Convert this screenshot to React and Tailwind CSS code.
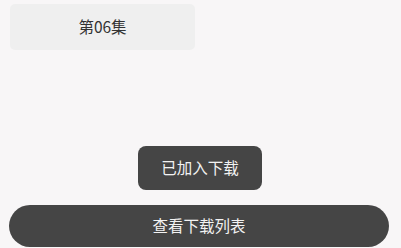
import React from 'react';

const font = { fontFamily: '"Noto Sans CJK SC", "Noto Sans", sans-serif' };

const App = () => {
  return (
    <div className="flex flex-col h-[248px] w-full bg-[#f8f6f7] overflow-hidden" style={font}>
      {/* episode card */}
      <div className="ml-[10px] mt-[4px] w-[185px] h-[46px] rounded-[5px] bg-[#efefef] flex items-center justify-center text-[15.5px] text-[#333333]">
        第06集
      </div>

      <div className="flex-1" />

      {/* toast */}
      <div className="ml-[138px] w-[124px] h-[44px] rounded-[8px] bg-[#454545] flex items-center justify-center text-[15.5px] text-[#f2f2f2]">
        已加入下载
      </div>

      {/* bottom button */}
      <button className="ml-[9px] mt-[15px] mb-[1px] w-[380px] h-[42px] rounded-full bg-[#454545] flex items-center justify-center text-[15.5px] text-[#f2f2f2]">
        查看下载列表
      </button>
    </div>
  );
};

export default App;
